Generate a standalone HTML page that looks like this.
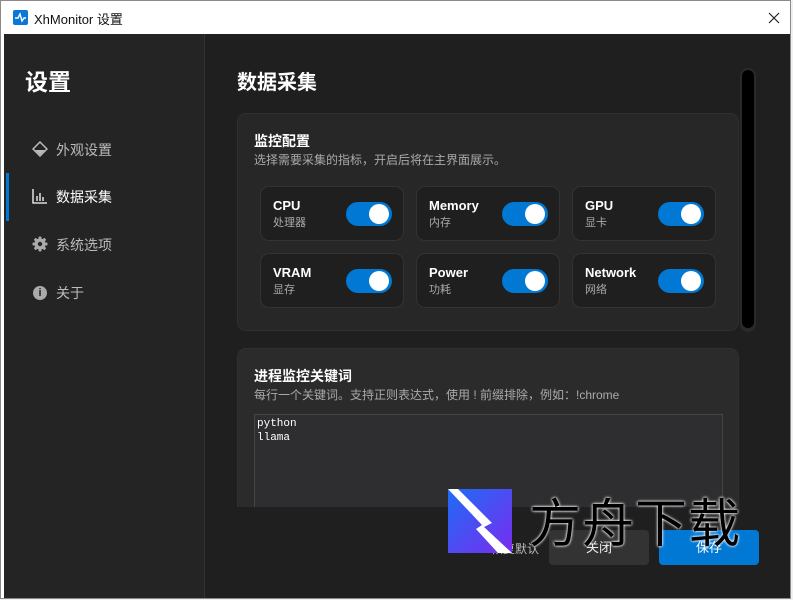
<!DOCTYPE html>
<html><head><meta charset="utf-8"><style>
*{margin:0;padding:0;box-sizing:border-box}
body{width:793px;height:600px;background:#f0f0f0;font-family:"Liberation Sans","Noto Sans CJK SC",sans-serif;position:relative;overflow:hidden}
.win{position:absolute;left:0;top:0;width:791px;height:599px;border:1px solid #8a8a8a;background:#fff}
.tb{position:absolute;left:0;top:0;width:789px;height:34px;background:#fff;font-size:13px;color:#111}
.side{position:absolute;left:3px;top:33px;width:201px;height:564px;background:#242424;border-right:1px solid #333}
.main{position:absolute;left:204px;top:33px;width:585px;height:564px;background:#1f1f1f}
.ab{position:absolute}
.nav{position:absolute;left:52px;font-size:14px;color:#bbb}
.card{position:absolute;background:#272727;border:1px solid #2f2f2f;border-radius:9px}
.tile{position:absolute;width:144px;height:55px;background:#1f1f1f;border:1px solid #333;border-radius:9px}
.tile b{position:absolute;left:12px;top:11px;font-size:13px;color:#fff}
.tile i{position:absolute;left:12px;top:27px;font-size:11px;color:#aaa;font-style:normal}
.tg{position:absolute;left:85px;top:15px;width:46px;height:24px;border-radius:12px;background:#0078d4}
.tg:after{content:"";position:absolute;right:3px;top:2px;width:20px;height:20px;border-radius:50%;background:#fff}
</style></head><body>
<div class="win">
<div class="tb">
<div class="ab" style="left:12px;top:9px;width:15px;height:15px;background:#0a78d7;border-radius:2px"><svg width="15" height="15"><path d="M2 8h3l2-4 2 7 2-3h2" stroke="#fff" stroke-width="1.4" fill="none"/></svg></div>
<div class="ab" style="left:33px;top:8px">XhMonitor 设置</div>
<svg class="ab" style="left:767px;top:11px" width="12" height="12"><path d="M1 1L11 11M11 1L1 11" stroke="#222" stroke-width="1.2"/></svg>
</div>
<div class="side">
<div class="ab" style="left:21px;top:29px;font-size:23px;font-weight:bold;color:#fff">设置</div>
<div class="ab" style="left:2px;top:139px;width:3px;height:48px;background:#0078d4"></div>
<svg class="ab" style="left:28px;top:107px" width="16" height="16"><path d="M8 1L15 8 8 15 1 8Z" stroke="#bbb" stroke-width="1.5" fill="none"/><path d="M3 9h10L8 14Z" fill="#bbb"/></svg>
<div class="nav" style="top:106px">外观设置</div>
<svg class="ab" style="left:28px;top:154px" width="16" height="16"><path d="M1 1v14h14M5 13V8M8 13V5M11 13V9" stroke="#fff" stroke-width="1.3" fill="none"/></svg>
<div class="nav" style="top:153px;color:#fff">数据采集</div>
<svg class="ab" style="left:28px;top:202px" width="16" height="16"><g fill="#aaa"><circle cx="8" cy="8" r="5.5"/><rect x="6.5" y="0.5" width="3" height="15" rx="1"/><rect x="0.5" y="6.5" width="15" height="3" rx="1"/><rect x="6.5" y="0.5" width="3" height="15" rx="1" transform="rotate(45 8 8)"/><rect x="6.5" y="0.5" width="3" height="15" rx="1" transform="rotate(-45 8 8)"/></g><circle cx="8" cy="8" r="2.2" fill="#242424"/></svg>
<div class="nav" style="top:201px">系统选项</div>
<div class="ab" style="left:29px;top:252px;width:14px;height:14px;border-radius:50%;background:#aaa;color:#242424;font-size:11px;font-weight:bold;text-align:center;line-height:14px">i</div>
<div class="nav" style="top:249px">关于</div>
</div>
<div class="main">
<div class="ab" style="left:32px;top:32px;font-size:20px;font-weight:bold;color:#fff">数据采集</div>
<div class="card" style="left:32px;top:79px;width:502px;height:218px">
<div class="ab" style="left:16px;top:17px;font-size:14px;font-weight:bold;color:#fff">监控配置</div>
<div class="ab" style="left:16px;top:37px;font-size:12px;color:#aaa">选择需要采集的指标，开启后将在主界面展示。</div>
<div class="tile" style="left:22px;top:72px"><b>CPU</b><i>处理器</i><div class="tg"></div></div>
<div class="tile" style="left:178px;top:72px"><b>Memory</b><i>内存</i><div class="tg"></div></div>
<div class="tile" style="left:334px;top:72px"><b>GPU</b><i>显卡</i><div class="tg"></div></div>
<div class="tile" style="left:22px;top:139px"><b>VRAM</b><i>显存</i><div class="tg"></div></div>
<div class="tile" style="left:178px;top:139px"><b>Power</b><i>功耗</i><div class="tg"></div></div>
<div class="tile" style="left:334px;top:139px"><b>Network</b><i>网络</i><div class="tg"></div></div>
</div>
<div class="ab" style="left:535px;top:34px;width:16px;height:264px;background:#2a2a2a;border-radius:8px"><div style="margin:2px;height:258px;background:#000;border-radius:6px"></div></div>
<div class="card" style="left:32px;top:314px;width:502px;height:200px;background:#2b2b2b">
<div class="ab" style="left:16px;top:17px;font-size:14px;font-weight:bold;color:#fff">进程监控关键词</div>
<div class="ab" style="left:16px;top:37px;font-size:12px;color:#aaa">每行一个关键词。支持正则表达式，使用 ! 前缀排除，例如：!chrome</div>
<div class="ab" style="left:16px;top:65px;width:469px;height:120px;background:#2e2e31;border:1px solid #444;font-family:'Liberation Mono',monospace;font-size:11px;color:#fff;padding:2px 2px;line-height:14px">python<br>llama</div>
</div>
<div class="ab" style="left:0;top:473px;width:585px;height:91px;background:#1f1f1f"></div>
<div class="ab" style="left:286px;top:506px;font-size:12px;color:#bbb">恢复默认</div>
<div class="ab" style="left:344px;top:496px;width:100px;height:35px;background:#333;border-radius:4px;color:#eee;font-size:13px;text-align:center;line-height:35px">关闭</div>
<div class="ab" style="left:454px;top:496px;width:100px;height:35px;background:#0078d4;border-radius:4px;color:#fff;font-size:13px;text-align:center;line-height:35px">保存</div>
</div>
<svg class="ab" style="left:447px;top:488px" width="64" height="64"><defs><linearGradient id="g" x1="0" y1="0" x2="1" y2="1"><stop offset="0" stop-color="#1e6cf5"/><stop offset="1" stop-color="#7a2cf0"/></linearGradient></defs><rect width="64" height="64" fill="url(#g)"/><path d="M0 0h10l34 34-8 4 28 26H50L28 40l6-4Z" fill="#fff"/></svg>
<div class="ab" style="left:528px;top:488px;font-size:52px;color:#000;letter-spacing:1px;text-shadow:0 0 3px #fff,0 0 2px #fff;font-family:'Noto Sans CJK SC',sans-serif;line-height:62px">方舟下载</div>
</div>
</body></html>
